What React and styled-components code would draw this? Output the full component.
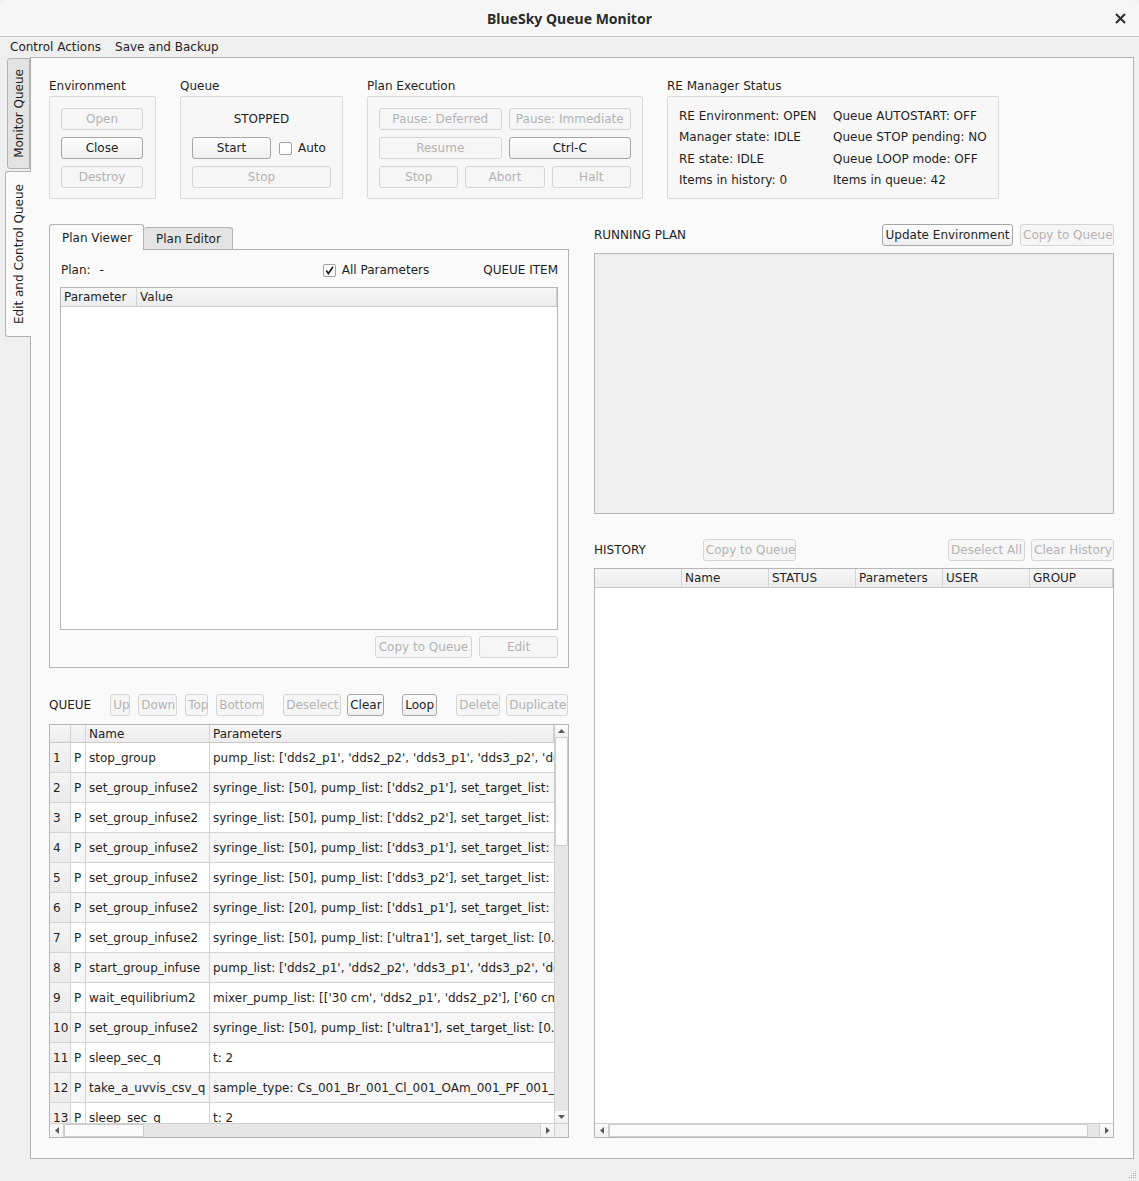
import React from 'react';
import styled, { createGlobalStyle } from 'styled-components';

const GlobalStyle = createGlobalStyle`
  html, body {
    margin: 0;
    padding: 0;
    background: #efefef;
  }
  body {
    font-family: "DejaVu Sans", "Noto Sans", sans-serif;
    font-size: 12px;
    color: #1f1f1f;
  }
  * {
    box-sizing: border-box;
  }
`;

const Window = styled.div`
  width: 1139px;
  height: 1181px;
  display: flex;
  flex-direction: column;
  background: #efefef;
  overflow: hidden;
`;

const TitleBar = styled.div`
  height: 37px;
  flex: none;
  display: grid;
  grid-template-columns: 1fr auto 1fr;
  align-items: center;
  background: #f6f6f6;
  border-bottom: 1px solid #c6c6c6;
  border-radius: 7px 7px 0 0;
`;

const Title = styled.div`
  grid-column: 2;
  font-family: "Noto Sans", "DejaVu Sans", sans-serif;
  font-weight: bold;
  font-size: 14px;
  color: #2b2b2b;
`;

const CloseButton = styled.div`
  grid-column: 3;
  justify-self: end;
  margin-right: 13px;
  display: flex;
`;

const MenuBar = styled.div`
  height: 20px;
  flex: none;
  display: flex;
  align-items: center;
  padding-left: 3px;
  background: #efefef;
`;

const MenuItem = styled.div`
  padding: 0 7px;
`;

const Body = styled.div`
  flex: 1;
  display: flex;
  padding: 0 5px 0 5px;
  min-height: 0;
`;

const Footer = styled.div`
  height: 22px;
  flex: none;
  display: flex;
  justify-content: flex-end;
  align-items: flex-end;
  padding: 0 2px 2px 0;
`;

const SideTabs = styled.div`
  width: 25px;
  flex: none;
  display: flex;
  flex-direction: column;
  padding-top: 1px;
  gap: 2px;
`;

const SideTab = styled.div`
  position: relative;
  z-index: ${p => (p.$active ? 1 : 0)};
  height: ${p => p.$h}px;
  margin-left: ${p => (p.$active ? 0 : 2)}px;
  margin-right: ${p => (p.$active ? -1 : 0)}px;
  background: ${p => (p.$active ? '#fafafa' : '#e3e3e3')};
  border: 1px solid #b2b2b2;
  border-right: ${p => (p.$active ? 'none' : '1px solid #b2b2b2')};
  border-radius: 3px 0 0 3px;
  display: flex;
  align-items: center;
  justify-content: center;
`;

const SideTabText = styled.span`
  writing-mode: vertical-rl;
  transform: rotate(180deg);
  white-space: nowrap;
`;

const Pane = styled.div`
  width: 1104px;
  flex: none;
  border: 1px solid #b2b2b2;
  background: #fafafa;
  padding: 20px 19px 0 18px;
  display: flex;
  flex-direction: column;
`;

const TopRow = styled.div`
  display: flex;
  gap: 24px;
`;

const Group = styled.div`
  width: ${p => p.$w}px;
  display: flex;
  flex-direction: column;
`;

const GroupLabel = styled.div`
  height: 16px;
  line-height: 16px;
  margin-bottom: 2px;
`;

const GroupBox = styled.div`
  height: 103px;
  border: 1px solid #d9d9d9;
  border-radius: 2px;
  background: #f7f7f7;
  padding: 11px;
  display: flex;
  flex-direction: column;
  gap: 7px;
`;

const StatusBox = styled(GroupBox)`
  display: grid;
  grid-template-columns: 154px auto;
  grid-auto-rows: 21.5px;
  align-items: center;
  gap: 0;
  padding: 8px 11px;
`;

const BtnRow = styled.div`
  display: flex;
  align-items: center;
  gap: 7px;
  height: 22px;
`;

const Btn = styled.button`
  height: 22px;
  width: ${p => (p.$w ? `${p.$w}px` : 'auto')};
  flex: ${p => (p.$grow ? 1 : 'none')};
  padding: 0 2px;
  font-family: inherit;
  font-size: 12px;
  white-space: nowrap;
  border: 1px solid ${p => (p.disabled ? '#d4d4d4' : '#a6a6a6')};
  border-radius: 3px;
  background: ${p => (p.disabled ? '#f6f6f6' : 'linear-gradient(#fefefe, #efefef)')};
  color: ${p => (p.disabled ? '#b3b3b3' : '#1f1f1f')};
`;

const StateText = styled.div`
  height: 22px;
  line-height: 22px;
  text-align: center;
`;

const CheckWrap = styled.label`
  display: flex;
  align-items: center;
  gap: 6px;
  margin-left: ${p => p.$ml || 0}px;
`;

const CheckBox = styled.span`
  width: 13px;
  height: 13px;
  border: 1px solid #a3a3a3;
  border-radius: 2px;
  background: #ffffff;
  display: flex;
  align-items: center;
  justify-content: center;
`;

const Columns = styled.div`
  display: flex;
  gap: 25px;
  margin-top: 25px;
`;

const Column = styled.div`
  width: 520px;
  display: flex;
  flex-direction: column;
`;

const TabBar = styled.div`
  height: 25px;
  display: flex;
  align-items: flex-end;
`;

const Tab = styled.div`
  position: relative;
  z-index: ${p => (p.$active ? 1 : 0)};
  width: ${p => p.$w}px;
  height: ${p => (p.$active ? 26 : 22)}px;
  margin-bottom: ${p => (p.$active ? -1 : 0)}px;
  padding-left: 12px;
  display: flex;
  align-items: center;
  background: ${p => (p.$active ? '#fafafa' : '#e4e4e4')};
  border: 1px solid #b2b2b2;
  border-bottom: none;
  border-left: ${p => (p.$active ? '1px solid #b2b2b2' : 'none')};
  border-radius: 3px 3px 0 0;
`;

const TabPane = styled.div`
  height: 419px;
  border: 1px solid #b2b2b2;
  background: #fafafa;
  padding: 12px 10px 9px 10px;
  display: flex;
  flex-direction: column;
`;

const PlanHead = styled.div`
  height: 16px;
  display: flex;
  align-items: center;
  padding-left: 1px;
`;

const Spacer = styled.div`
  flex: 1;
`;

const Dash = styled.span`
  margin-left: 9px;
`;

const QueueItemText = styled.span`
  margin-left: 54px;
`;

const PlanTable = styled.div`
  margin-top: 9px;
  height: 343px;
  border: 1px solid #b6b6b6;
  background: #ffffff;
`;

const Header = styled.div`
  height: ${p => p.$h || 19}px;
  display: flex;
  background: linear-gradient(#f7f7f7, #ececec);
  border-bottom: 1px solid #c9c9c9;
`;

const HeadCell = styled.div`
  width: ${p => (p.$w ? `${p.$w}px` : 'auto')};
  flex: ${p => (p.$w ? 'none' : 1)};
  padding-left: 3px;
  display: flex;
  align-items: center;
  white-space: nowrap;
  overflow: hidden;
  border-right: 1px solid #d2d2d2;
`;

const ButtonsRight = styled.div`
  margin-top: 6px;
  display: flex;
  justify-content: flex-end;
  gap: 7px;
`;

const QueueBar = styled.div`
  margin-top: 26px;
  height: 22px;
  display: flex;
  align-items: center;
`;

const BarLabel = styled.span`
  margin-right: ${p => p.$mr || 0}px;
`;

const BtnGroup = styled.div`
  display: flex;
  gap: ${p => p.$gap || 7}px;
  margin-left: ${p => p.$ml || 0}px;
`;

const TableFrame = styled.div`
  margin-top: ${p => p.$mt || 0}px;
  height: ${p => p.$h}px;
  border: 1px solid #b6b6b6;
  display: grid;
  grid-template-columns: ${p => (p.$vscroll ? '1fr 14px' : '1fr')};
  grid-template-rows: 1fr 14px;
  background: #ffffff;
  overflow: hidden;
`;

const Viewport = styled.div`
  overflow: hidden;
  min-width: 0;
`;

const QRow = styled.div`
  height: 30px;
  display: flex;
  background: ${p => (p.$alt ? '#f6f6f6' : '#ffffff')};
`;

const Cell = styled.div`
  width: ${p => p.$w}px;
  flex: none;
  padding-left: 3px;
  display: flex;
  align-items: center;
  white-space: nowrap;
  overflow: hidden;
  border-right: 1px solid #d4d4d4;
  border-bottom: 1px solid #d4d4d4;
  background: ${p => (p.$head ? 'linear-gradient(#f4f4f4, #ebebeb)' : 'transparent')};
`;

const VScroll = styled.div`
  display: flex;
  flex-direction: column;
  background: #e6e6e6;
  border-left: 1px solid #cfcfcf;
`;

const HScroll = styled.div`
  display: flex;
  background: #e6e6e6;
  border-top: 1px solid #cfcfcf;
`;

const ArrowBox = styled.div`
  width: ${p => (p.$v ? '100%' : '14px')};
  height: ${p => (p.$v ? '12px' : '100%')};
  flex: none;
  display: flex;
  align-items: center;
  justify-content: center;
  background: linear-gradient(#fbfbfb, #f1f1f1);
  border-right: ${p => (p.$left ? '1px solid #cfcfcf' : 'none')};
  border-left: ${p => (p.$right ? '1px solid #cfcfcf' : 'none')};
`;

const Track = styled.div`
  flex: 1;
  display: flex;
  flex-direction: ${p => (p.$v ? 'column' : 'row')};
`;

const Handle = styled.div`
  flex: none;
  ${p => (p.$v ? `height: ${p.$size}px;` : `width: ${p.$size}px;`)}
  background: #fbfbfb;
  border: 1px solid #cdcdcd;
  border-radius: 1px;
`;

const Corner = styled.div`
  background: #efefef;
  border-top: 1px solid #cfcfcf;
  border-left: 1px solid #cfcfcf;
`;

const HeadRow = styled.div`
  height: 22px;
  display: flex;
  align-items: center;
  gap: ${p => p.$gap || 0}px;
`;

const RunningBox = styled.div`
  margin-top: 7px;
  height: 261px;
  border: 1px solid #b6b6b6;
  background: #efefef;
`;

const HistoryHead = styled(HeadRow)`
  margin-top: 25px;
`;

const Arrow = ({ dir }) => {
  const pts = {
    up: '0,4 3.5,0 7,4',
    down: '0,0 3.5,4 7,0',
    left: '4,0 0,3.5 4,7',
    right: '0,0 4,3.5 0,7',
  }[dir];
  const v = dir === 'up' || dir === 'down';
  return (
    <svg width={v ? 7 : 4} height={v ? 4 : 7}>
      <polygon points={pts} fill="#5a5a5a" />
    </svg>
  );
};

const Check = ({ checked }) => (
  <CheckBox>
    {checked && (
      <svg width="11" height="11" viewBox="0 0 11 11">
        <path d="M2.2 5.6 L4.4 8.6 L9 1.8" fill="none" stroke="#222" strokeWidth="1.7" />
      </svg>
    )}
  </CheckBox>
);

const queueItems = [
  ['stop_group', "pump_list: ['dds2_p1', 'dds2_p2', 'dds3_p1', 'dds3_p2', 'dds1_p1', 'ultra1']"],
  ['set_group_infuse2', "syringe_list: [50], pump_list: ['dds2_p1'], set_target_list: [100], rate_list: [0]"],
  ['set_group_infuse2', "syringe_list: [50], pump_list: ['dds2_p2'], set_target_list: [100], rate_list: [0]"],
  ['set_group_infuse2', "syringe_list: [50], pump_list: ['dds3_p1'], set_target_list: [100], rate_list: [0]"],
  ['set_group_infuse2', "syringe_list: [50], pump_list: ['dds3_p2'], set_target_list: [100], rate_list: [0]"],
  ['set_group_infuse2', "syringe_list: [20], pump_list: ['dds1_p1'], set_target_list: [100], rate_list: [0]"],
  ['set_group_infuse2', "syringe_list: [50], pump_list: ['ultra1'], set_target_list: [0.0], rate_list: [0]"],
  ['start_group_infuse', "pump_list: ['dds2_p1', 'dds2_p2', 'dds3_p1', 'dds3_p2', 'dds1_p1', 'ultra1']"],
  ['wait_equilibrium2', "mixer_pump_list: [['30 cm', 'dds2_p1', 'dds2_p2'], ['60 cm', 'dds3_p1']]"],
  ['set_group_infuse2', "syringe_list: [50], pump_list: ['ultra1'], set_target_list: [0.0], rate_list: [0]"],
  ['sleep_sec_q', 't: 2'],
  ['take_a_uvvis_csv_q', 'sample_type: Cs_001_Br_001_Cl_001_OAm_001_PF_001_Tol_001'],
  ['sleep_sec_q', 't: 2'],
];

const historyCols = ['', 'Name', 'STATUS', 'Parameters', 'USER', 'GROUP'];

export default function App() {
  return (
    <Window>
      <GlobalStyle />
      <TitleBar>
        <Title>BlueSky Queue Monitor</Title>
        <CloseButton>
          <svg width="11" height="11" viewBox="0 0 11 11">
            <path d="M1 1 L10 10 M10 1 L1 10" stroke="#2a2a2a" strokeWidth="2" />
          </svg>
        </CloseButton>
      </TitleBar>
      <MenuBar>
        <MenuItem>Control Actions</MenuItem>
        <MenuItem>Save and Backup</MenuItem>
      </MenuBar>
      <Body>
        <SideTabs>
          <SideTab $h={111}>
            <SideTabText>Monitor Queue</SideTabText>
          </SideTab>
          <SideTab $active $h={166}>
            <SideTabText>Edit and Control Queue</SideTabText>
          </SideTab>
        </SideTabs>
        <Pane>
          <TopRow>
            <Group $w={107}>
              <GroupLabel>Environment</GroupLabel>
              <GroupBox>
                <Btn $w={82} disabled>Open</Btn>
                <Btn $w={82}>Close</Btn>
                <Btn $w={82} disabled>Destroy</Btn>
              </GroupBox>
            </Group>
            <Group $w={163}>
              <GroupLabel>Queue</GroupLabel>
              <GroupBox>
                <StateText>STOPPED</StateText>
                <BtnRow>
                  <Btn $w={79}>Start</Btn>
                  <CheckWrap $ml={1}>
                    <Check />
                    Auto
                  </CheckWrap>
                </BtnRow>
                <Btn $w={139} disabled>Stop</Btn>
              </GroupBox>
            </Group>
            <Group $w={276}>
              <GroupLabel>Plan Execution</GroupLabel>
              <GroupBox>
                <BtnRow>
                  <Btn $grow disabled>Pause: Deferred</Btn>
                  <Btn $grow disabled>Pause: Immediate</Btn>
                </BtnRow>
                <BtnRow>
                  <Btn $grow disabled>Resume</Btn>
                  <Btn $grow>Ctrl-C</Btn>
                </BtnRow>
                <BtnRow>
                  <Btn $grow disabled>Stop</Btn>
                  <Btn $grow disabled>Abort</Btn>
                  <Btn $grow disabled>Halt</Btn>
                </BtnRow>
              </GroupBox>
            </Group>
            <Group $w={332}>
              <GroupLabel>RE Manager Status</GroupLabel>
              <StatusBox>
                <span>RE Environment: OPEN</span>
                <span>Queue AUTOSTART: OFF</span>
                <span>Manager state: IDLE</span>
                <span>Queue STOP pending: NO</span>
                <span>RE state: IDLE</span>
                <span>Queue LOOP mode: OFF</span>
                <span>Items in history: 0</span>
                <span>Items in queue: 42</span>
              </StatusBox>
            </Group>
          </TopRow>

          <Columns>
            <Column>
              <TabBar>
                <Tab $active $w={95}>Plan Viewer</Tab>
                <Tab $w={89}>Plan Editor</Tab>
              </TabBar>
              <TabPane>
                <PlanHead>
                  <span>Plan:</span>
                  <Dash>-</Dash>
                  <Spacer />
                  <CheckWrap>
                    <Check checked />
                    All Parameters
                  </CheckWrap>
                  <QueueItemText>QUEUE ITEM</QueueItemText>
                </PlanHead>
                <PlanTable>
                  <Header>
                    <HeadCell $w={76}>Parameter</HeadCell>
                    <HeadCell>Value</HeadCell>
                  </Header>
                </PlanTable>
                <ButtonsRight>
                  <Btn $w={97} disabled>Copy to Queue</Btn>
                  <Btn $w={79} disabled>Edit</Btn>
                </ButtonsRight>
              </TabPane>

              <QueueBar>
                <BarLabel $mr={19}>QUEUE</BarLabel>
                <BtnGroup $gap={8}>
                  <Btn $w={20} disabled>Up</Btn>
                  <Btn $w={39} disabled>Down</Btn>
                  <Btn $w={23} disabled>Top</Btn>
                  <Btn $w={48} disabled>Bottom</Btn>
                </BtnGroup>
                <BtnGroup $ml={19} $gap={6}>
                  <Btn $w={58} disabled>Deselect</Btn>
                  <Btn $w={37}>Clear</Btn>
                </BtnGroup>
                <BtnGroup $ml={18}>
                  <Btn $w={35}>Loop</Btn>
                </BtnGroup>
                <BtnGroup $ml={19} $gap={6}>
                  <Btn $w={44} disabled>Delete</Btn>
                  <Btn $w={62} disabled>Duplicate</Btn>
                </BtnGroup>
              </QueueBar>

              <TableFrame $mt={8} $h={414} $vscroll>
                <Viewport>
                  <Header $h={18}>
                    <HeadCell $w={21} />
                    <HeadCell $w={15} />
                    <HeadCell $w={124}>Name</HeadCell>
                    <HeadCell>Parameters</HeadCell>
                  </Header>
                  {queueItems.map(([name, params], i) => (
                    <QRow key={i} $alt={i % 2 === 1}>
                      <Cell $w={21} $head>{i + 1}</Cell>
                      <Cell $w={15}>P</Cell>
                      <Cell $w={124}>{name}</Cell>
                      <Cell $w={348}>{params}</Cell>
                    </QRow>
                  ))}
                </Viewport>
                <VScroll>
                  <ArrowBox $v>
                    <Arrow dir="up" />
                  </ArrowBox>
                  <Track $v>
                    <Handle $v $size={109} />
                  </Track>
                  <ArrowBox $v>
                    <Arrow dir="down" />
                  </ArrowBox>
                </VScroll>
                <HScroll>
                  <ArrowBox $left>
                    <Arrow dir="left" />
                  </ArrowBox>
                  <Track>
                    <Handle $size={80} />
                  </Track>
                  <ArrowBox $right>
                    <Arrow dir="right" />
                  </ArrowBox>
                </HScroll>
                <Corner />
              </TableFrame>
            </Column>

            <Column>
              <HeadRow $gap={7}>
                <span>RUNNING PLAN</span>
                <Spacer />
                <Btn $w={131}>Update Environment</Btn>
                <Btn $w={94} disabled>Copy to Queue</Btn>
              </HeadRow>
              <RunningBox />

              <HistoryHead $gap={6}>
                <BarLabel $mr={51}>HISTORY</BarLabel>
                <Btn $w={93} disabled>Copy to Queue</Btn>
                <Spacer />
                <Btn $w={77} disabled>Deselect All</Btn>
                <Btn $w={83} disabled>Clear History</Btn>
              </HistoryHead>

              <TableFrame $mt={7} $h={570}>
                <Viewport>
                  <Header>
                    {historyCols.map((c, i) => (
                      <HeadCell key={i} $w={i === 5 ? undefined : 87}>{c}</HeadCell>
                    ))}
                  </Header>
                </Viewport>
                <HScroll>
                  <ArrowBox $left>
                    <Arrow dir="left" />
                  </ArrowBox>
                  <Track>
                    <Handle $size={479} />
                  </Track>
                  <ArrowBox $right>
                    <Arrow dir="right" />
                  </ArrowBox>
                </HScroll>
              </TableFrame>
            </Column>
          </Columns>
        </Pane>
      </Body>
      <Footer>
        <svg width="8" height="8" viewBox="0 0 8 8">
          <g fill="#b0b0b0">
            <rect x="6" y="0" width="1" height="1" />
            <rect x="4" y="2" width="1" height="1" />
            <rect x="6" y="2" width="1" height="1" />
            <rect x="2" y="4" width="1" height="1" />
            <rect x="4" y="4" width="1" height="1" />
            <rect x="6" y="4" width="1" height="1" />
            <rect x="0" y="6" width="1" height="1" />
            <rect x="2" y="6" width="1" height="1" />
            <rect x="4" y="6" width="1" height="1" />
            <rect x="6" y="6" width="1" height="1" />
          </g>
        </svg>
      </Footer>
    </Window>
  );
}
